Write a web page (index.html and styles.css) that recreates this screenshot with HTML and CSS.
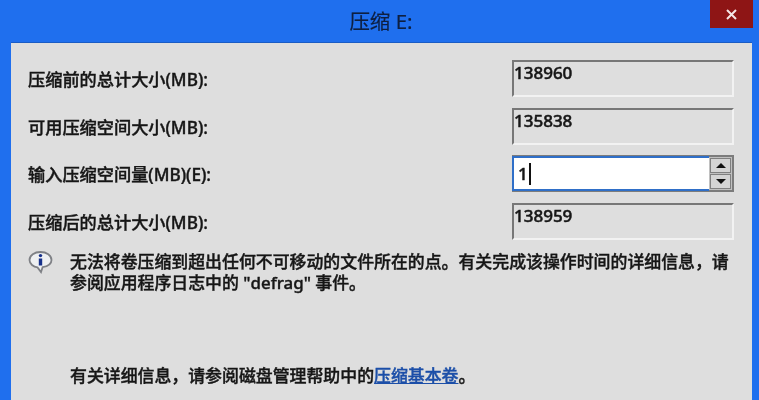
FILE: index.html
```html
<!DOCTYPE html>
<html lang="zh-CN">
<head>
    <meta charset="UTF-8">
    <title>压缩 E:</title>
    <link rel="stylesheet" href="styles.css">
</head>
<body>
    <div class="dialog">
        <div class="title-bar">
            <span class="title">压缩 E:</span>
            <div class="close-btn">
                <svg width="11" height="11" viewBox="0 0 11 11"><path d="M1 1L10 10M10 1L1 10" stroke="#f4e6e6" stroke-width="2"/></svg>
            </div>
        </div>
        <div class="panel">
            <div class="form-row">
                <span class="label">压缩前的总计大小(MB):</span>
                <div class="readonly-field">138960</div>
            </div>
            <div class="form-row">
                <span class="label">可用压缩空间大小(MB):</span>
                <div class="readonly-field">135838</div>
            </div>
            <div class="form-row">
                <span class="label">输入压缩空间量(MB)(E):</span>
                <div class="spin-field">
                    <div class="spin-input"><span>1</span><i class="caret"></i></div>
                    <div class="spin-buttons">
                        <div class="spin-btn"><i class="arrow-up"></i></div>
                        <div class="spin-btn"><i class="arrow-down"></i></div>
                    </div>
                </div>
            </div>
            <div class="form-row">
                <span class="label">压缩后的总计大小(MB):</span>
                <div class="readonly-field">138959</div>
            </div>
            <div class="note">
                <svg class="info-icon" width="25" height="24" viewBox="0 0 25 24">
                    <path d="M12.5 2C6.5 2 1.5 5.3 1.5 10C1.5 14 5.5 17 9.5 17.4L13 22L14.6 17.2C19.5 16.4 23.5 14 23.5 10C23.5 5.3 18.5 2 12.5 2Z" fill="#eef0f2" stroke="#7f8186" stroke-width="1.8"/>
                    <circle cx="12.5" cy="5.6" r="1.7" fill="#16308a"/>
                    <path d="M12.5 8.5V15.5" stroke="#16308a" stroke-width="3.4"/>
                </svg>
                <p>无法将卷压缩到超出任何不可移动的文件所在的点。有关完成该操作时间的详细信息，请参阅应用程序日志中的 "defrag" 事件。</p>
            </div>
            <p class="help">有关详细信息，请参阅磁盘管理帮助中的<a class="help-link">压缩基本卷</a>。</p>
        </div>
    </div>
</body>
</html>
```

FILE: styles.css
```css
html, body {
    margin: 0;
    height: 400px;
    overflow: hidden;
}

body {
    font-family: "Noto Sans", "Noto Sans CJK SC", sans-serif;
    font-size: 17px;
    color: #161616;
}

.dialog {
    height: 400px;
    background-color: #1f6fee;
    display: flex;
    flex-direction: column;
    padding: 0 7px 0 11px;
    filter: blur(0.4px);
}

.title-bar {
    height: 42px;
    flex-shrink: 0;
    display: flex;
    align-items: flex-start;
    justify-content: center;
    margin-right: -7px;
    margin-left: -11px;
    padding-left: 3px;
    position: relative;
}

.title {
    font-size: 20.5px;
    line-height: 42px;
    color: #0e1f40;
    -webkit-text-stroke: 0.2px #0e1f40;
}

.close-btn {
    position: absolute;
    top: 0;
    right: 6px;
    width: 43px;
    height: 28px;
    background-color: #8e1515;
    display: flex;
    align-items: center;
    justify-content: center;
}

.panel {
    flex: 1;
    background-color: #dedede;
    border-top: 1px solid #1a5cc4;
    padding: 17px 18px 0 17px;
    display: flex;
    flex-direction: column;
}

.form-row {
    display: flex;
    justify-content: space-between;
    height: 37px;
    margin-bottom: 10.5px;
    align-items: center;
}

.label {
    font-size: 17.2px;
    font-weight: 500;
    -webkit-text-stroke: 0.4px #161616;
}

.readonly-field {
    width: 222px;
    height: 37px;
    box-sizing: border-box;
    border-top: 2px solid #777;
    border-left: 2px solid #777;
    border-right: 2px solid #f2f2f2;
    border-bottom: 2px solid #f2f2f2;
    font-size: 17px;
    line-height: 21px;
    font-weight: 500;
    -webkit-text-stroke: 0.5px #161616;
}

.spin-field {
    width: 222px;
    height: 37px;
    display: flex;
    box-sizing: border-box;
    border: 2px solid #7c7c7c;
    border-left: none;
    background-color: #c0c0c0;
}

.spin-input {
    flex: 1;
    background-color: #fff;
    border: 2px solid #2f6fc8;
    border-right: none;
    margin: -1px 0;
    display: flex;
    align-items: center;
    padding-left: 4px;
    font-size: 17px;
    font-weight: 500;
    -webkit-text-stroke: 0.5px #161616;
}

.caret {
    width: 2px;
    height: 22px;
    margin-left: 1px;
    background-color: #111;
}

.spin-buttons {
    width: 21px;
    padding: 1px;
    display: flex;
    flex-direction: column;
    gap: 1px;
}

.spin-btn {
    flex: 1;
    background-color: #d4d4d4;
    border: 1px solid #808080;
    display: flex;
    align-items: center;
    justify-content: center;
}

.arrow-up, .arrow-down {
    width: 0;
    height: 0;
    border-left: 5px solid transparent;
    border-right: 5px solid transparent;
}

.arrow-up {
    border-bottom: 5px solid #111;
}

.arrow-down {
    border-top: 5px solid #111;
}

.note {
    display: flex;
}

.info-icon {
    flex-shrink: 0;
    margin-right: 17px;
}

.note p, .help {
    margin: 0;
    font-size: 16.9px;
    line-height: 21px;
    font-weight: 500;
    -webkit-text-stroke: 0.4px #161616;
}

.note p {
    padding-top: 1px;
}

.help {
    margin-top: 72px;
    margin-left: 42px;
}

.help-link {
    color: #1c4fa8;
    -webkit-text-stroke: 0.4px #1c4fa8;
    text-decoration: underline;
}
```
